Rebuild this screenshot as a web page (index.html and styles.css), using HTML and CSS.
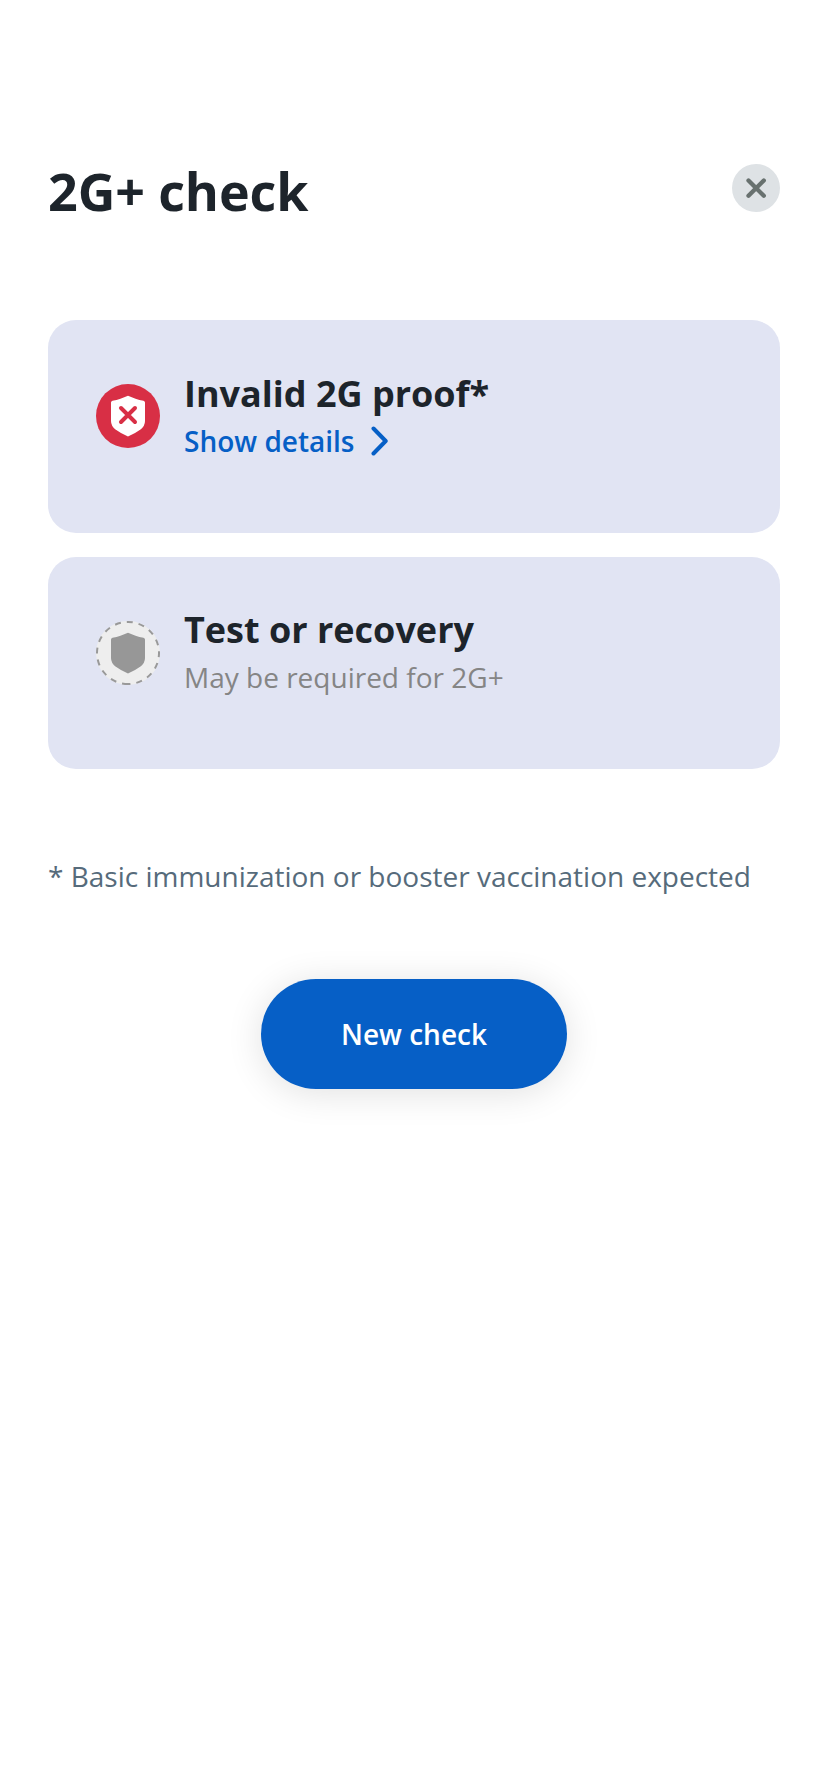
FILE: index.html
```html
<!DOCTYPE html>
<html lang="en">
<head>
<meta charset="utf-8">
<title>2G+ check</title>
<link rel="stylesheet" href="styles.css">
</head>
<body>
<main class="screen">
  <header class="header">
    <h1 class="heading">2G+ check</h1>
    <button class="close" aria-label="Close">
      <svg width="48" height="48" viewBox="0 0 48 48"><path d="M16.5 16.5 31.8 31.8M31.8 16.5 16.5 31.8" fill="none" stroke="#68716f" stroke-width="4.300" stroke-linecap="round"/></svg>
    </button>
  </header>
  <section class="cards">
    <article class="card card-invalid">
      <svg class="status" width="64" height="64" viewBox="0 0 64 64">
        <circle cx="32" cy="32" r="32" fill="#d82f45"/>
        <path d="M32 11.700 C37 14 42 15.700 47.500 16.800 Q49 17.200 49 18.500 V37 Q49 42 44.500 45.500 Q39 49.500 32 52.500 Q25 49.500 19.500 45.500 Q15 42 15 37 V18.500 Q15 17.200 16.500 16.800 C22 15.700 27 14 32 11.700Z" fill="#fff"/>
        <path d="M25 24 39 38M39 24 25 38" stroke="#d82f45" stroke-width="4" stroke-linecap="round"/>
      </svg>
      <div class="text">
        <h2 class="title">Invalid 2G proof*</h2>
        <a class="details">Show details
          <svg width="18" height="30" viewBox="0 0 18 30"><path d="M2.500 2.500 14.700 15 2.500 27.500" fill="none" stroke="#065fc6" stroke-width="4" stroke-linecap="round" stroke-linejoin="round"/></svg>
        </a>
      </div>
    </article>
    <article class="card">
      <svg class="status" width="64" height="64" viewBox="0 0 64 64">
        <circle cx="32" cy="32" r="32" fill="#eeeeee"/>
        <circle cx="32" cy="32" r="31" fill="none" stroke="#999" stroke-width="2" stroke-dasharray="6 6" transform="rotate(90 32 32)"/>
        <path d="M32 11.700 C37 14 42 15.700 47.500 16.800 Q49 17.200 49 18.500 V37 Q49 42 44.500 45.500 Q39 49.500 32 52.500 Q25 49.500 19.500 45.500 Q15 42 15 37 V18.500 Q15 17.200 16.500 16.800 C22 15.700 27 14 32 11.700Z" fill="#979797"/>
      </svg>
      <div class="text">
        <h2 class="title">Test or recovery</h2>
        <p class="hint">May be required for 2G+</p>
      </div>
    </article>
  </section>
  <p class="note">* Basic immunization or booster vaccination expected</p>
  <button class="primary">New check</button>
</main>
</body>
</html>
```
FILE: styles.css
```css
* { box-sizing: border-box; margin: 0; }
body {
  background: #fff;
  color: #1d242b;
  font-family: "Open Sans", "Noto Sans", sans-serif;
  font-size: 28px;
}
button { border: 0; padding: 0; font: inherit; }
svg { display: block; flex: none; }
.screen {
  display: flex;
  flex-direction: column;
  min-height: 1792px;
  padding: 155px 48px 0;
}
.header {
  display: flex;
  justify-content: space-between;
  height: 165px;
}
.heading { font-size: 52px; line-height: 72px; font-weight: 700; letter-spacing: -0.1px; }
.close {
  width: 48px;
  height: 48px;
  margin-top: 9px;
  border-radius: 50%;
  background: #dee2e5;
}
.cards { display: flex; flex-direction: column; gap: 24px; }
.card {
  display: flex;
  gap: 24px;
  height: 212.5px;
  padding: 48px;
  border-radius: 28px;
  background: #e1e4f3;
}
.status { margin-top: 16px; }
.title { font-size: 36px; line-height: 50px; font-weight: 700; }
.card-invalid .text { margin-top: 1px; }
.details {
  display: flex;
  align-items: center;
  gap: 16px;
  line-height: 44px;
  font-weight: 600;
  color: #065fc6;
}
.hint { line-height: 45px; color: #858585; }
.note { margin-top: 88px; line-height: 38px; color: #566b7b; white-space: nowrap; }
.primary {
  align-self: center;
  width: 306px;
  height: 110px;
  margin-top: 84px;
  border-radius: 55px;
  background: #065fc6;
  box-shadow: 0 4px 36px rgba(0, 0, 0, 0.12);
  color: #fff;
  font-weight: 600;
}
```
